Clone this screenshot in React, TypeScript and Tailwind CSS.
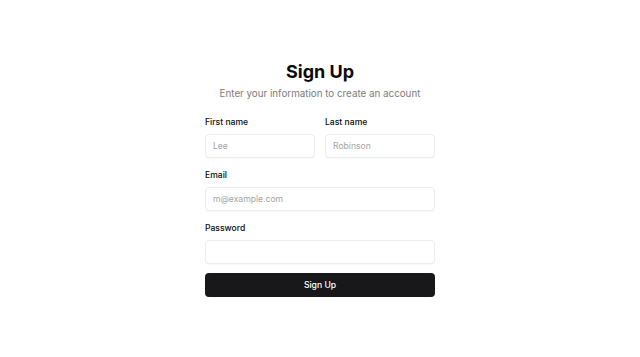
import React from 'react';

const Field = ({ label, placeholder, type = 'text' }: { label: string; placeholder?: string; type?: string }) => (
  <div className="flex flex-col gap-[6px]">
    <label className="text-[8.6px] leading-[12px] font-medium text-[#0a0a0a]">{label}</label>
    <input
      type={type}
      placeholder={placeholder}
      className="h-[24px] w-full rounded-[4px] border border-[#ececec] bg-white px-[7px] text-[8.6px] text-[#0a0a0a] placeholder:text-[#a3a3a3] shadow-[0_1px_1px_rgba(0,0,0,0.03)] outline-none"
    />
  </div>
);

const App = () => {
  return (
    <div className="flex min-h-screen items-center justify-center bg-white font-['Inter',sans-serif]">
      <div className="w-[230px]">
        <div className="flex flex-col items-center">
          <h1 className="text-[18px] leading-[24px] font-bold text-[#0a0a0a]">Sign Up</h1>
          <p className="mt-[3px] text-[9.8px] leading-[14px] text-[#7c7c7c]">Enter your information to create an account</p>
        </div>
        <div className="mt-[15px] flex flex-col gap-[11px]">
          <div className="grid grid-cols-2 gap-[10px]">
            <Field label="First name" placeholder="Lee" />
            <Field label="Last name" placeholder="Robinson" />
          </div>
          <Field label="Email" placeholder="m@example.com" type="email" />
          <Field label="Password" type="password" />
        </div>
        <button className="mt-[9px] h-[24px] w-full rounded-[4px] bg-[#18181b] text-[8.6px] font-medium text-white">
          Sign Up
        </button>
      </div>
    </div>
  );
};

export default App;
